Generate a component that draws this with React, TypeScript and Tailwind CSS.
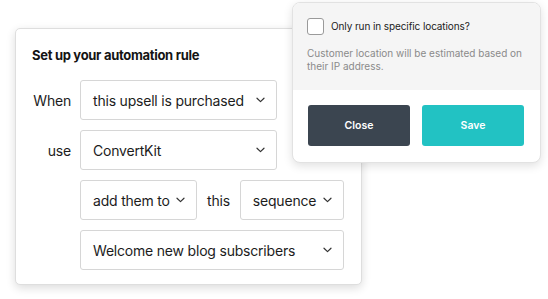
const Chevron = () => (
  <svg width="9" height="6" viewBox="0 0 9 6" fill="none" className="shrink-0">
    <path d="M1 1.2 L4.5 4.6 L8 1.2" stroke="#333" strokeWidth="1.2" strokeLinecap="round" strokeLinejoin="round" />
  </svg>
)

function Select({ label, className }: { label: string; className: string }) {
  return (
    <div
      className={`flex h-[40px] items-center justify-between whitespace-nowrap rounded-[3px] border border-[#d6d6d6] bg-white pl-[12px] pr-[11px] text-[14px] tracking-[-0.2px] text-[#1c1c1c] ${className}`}
    >
      <span>{label}</span>
      <Chevron />
    </div>
  )
}

export default function App() {
  return (
    <div className="relative h-[299px] w-[548px] overflow-hidden bg-white font-['Inter',sans-serif]">
      <div className="ml-[15px] mt-[28px] h-[257px] w-[347px] rounded-[5px] border border-[#dedede] bg-white pl-[16px] pt-[16px] shadow-[0_3px_10px_rgba(0,0,0,0.14)]">
        <h2 className="text-[13px] font-bold leading-[20px] tracking-[-0.3px] text-[#141414]">
          Set up your automation rule
        </h2>
        <div className="mt-[15px] flex flex-col gap-[10px] whitespace-nowrap text-[14px] tracking-[-0.2px] text-[#1c1c1c]">
          <div className="flex items-center">
            <span className="w-[39px] text-right">When</span>
            <Select label="this upsell is purchased" className="ml-[9px] w-[197px]" />
          </div>
          <div className="flex items-center">
            <span className="w-[39px] text-right">use</span>
            <Select label="ConvertKit" className="ml-[9px] w-[197px]" />
          </div>
          <div className="ml-[48px] flex items-center">
            <Select label="add them to" className="w-[117px]" />
            <span className="mx-[10px]">this</span>
            <Select label="sequence" className="w-[104px]" />
          </div>
          <div className="ml-[48px] flex items-center">
            <Select label="Welcome new blog subscribers" className="w-[264px]" />
          </div>
        </div>
      </div>

      <div className="absolute left-[292px] top-[2px] w-[249px] overflow-hidden rounded-[8px] border border-[#e2e2e2] bg-white shadow-[0_3px_10px_rgba(0,0,0,0.12)]">
        <div className="h-[87px] bg-[#f5f5f5] pl-[14px] pr-[12px] pt-[15px]">
          <div className="flex items-center gap-[7px]">
            <div className="h-[17px] w-[17px] rounded-[3px] border border-[#9a9a9a] bg-white" />
            <span className="whitespace-nowrap text-[10px] tracking-[-0.1px] text-[#1c1c1c]">Only run in specific locations?</span>
          </div>
          <p className="mt-[12px] text-[10px] leading-[13px] text-[#8a8a8a]">
            Customer location will be estimated based on their IP address.
          </p>
        </div>
        <div className="flex gap-[12px] px-[15px] pb-[16px] pt-[15px]">
          <button className="h-[41px] w-[102px] rounded-[3px] bg-[#3b4550] text-[10.5px] font-semibold text-white">
            Close
          </button>
          <button className="h-[41px] w-[102px] rounded-[3px] bg-[#22c2c3] text-[10.5px] font-semibold text-white">
            Save
          </button>
        </div>
      </div>
    </div>
  )
}
